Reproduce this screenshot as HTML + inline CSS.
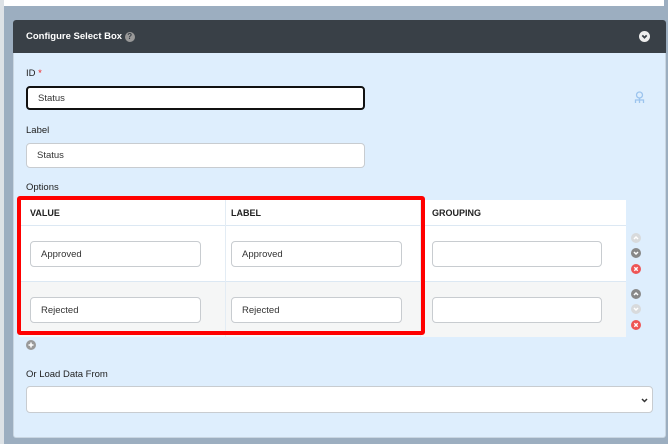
<!DOCTYPE html><html><head><style>
body{margin:0;width:668px;height:444px;background:#9caec0;font-family:"Liberation Sans",sans-serif;position:relative;overflow:hidden;font-size:9.5px;color:#222}
.a{position:absolute}
.in{position:absolute;background:#fff;border:1px solid #c8ccd0;border-radius:4px;box-sizing:border-box;padding-left:10px;font-size:9.5px;color:#333;display:flex;align-items:center}
.ic{position:absolute;width:10px;height:10px}
</style></head><body>
<div class="a" style="left:0;top:0;width:4px;height:444px;background:#dde2e6"></div>
<div class="a" style="left:4px;top:0;width:660px;height:6px;background:#fff"></div>
<div class="a" style="left:13px;top:20px;width:653px;height:418px;background:#deeefd;border-radius:3px;border:1px solid #c9d6e2;box-sizing:border-box"></div>
<div class="a" style="left:13px;top:20px;width:653px;height:33px;background:#394047;border-radius:3px 3px 0 0"></div>
<div class="a" style="left:26px;top:31px;color:#fff;font-weight:bold;font-size:9.5px">Configure Select Box <span style="display:inline-block;width:10px;height:10px;border-radius:50%;background:#999;color:#394047;font-size:8px;line-height:10px;text-align:center">?</span></div>
<svg class="ic" style="left:639px;top:31px;width:11px;height:11px" viewBox="0 0 10 10"><circle cx="5" cy="5" r="5" fill="#eee"/><path d="M3 4l2 2 2-2" stroke="#394047" stroke-width="1.6" fill="none"/></svg>
<div class="a" style="left:26px;top:68px">ID <span style="color:#e22">*</span></div>
<div class="in" style="left:26px;top:86px;width:339px;height:24px;border:2px solid #111">Status</div>
<svg class="a" style="left:634px;top:91px" width="11" height="13" viewBox="0 0 11 13"><circle cx="5.5" cy="4" r="3" fill="none" stroke="#9cc4ee" stroke-width="1.3"/><path d="M1.5 12v-3h8v3M5.5 7v5" stroke="#9cc4ee" stroke-width="1.3" fill="none"/></svg>
<div class="a" style="left:26px;top:125px">Label</div>
<div class="in" style="left:26px;top:143px;width:339px;height:25px">Status</div>
<div class="a" style="left:26px;top:182px">Options</div>
<div class="a" style="left:19px;top:200px;width:607px;height:26px;background:#fff;border-bottom:1px solid #dce8f3;box-sizing:border-box"></div>
<div class="a" style="left:19px;top:226px;width:607px;height:56px;background:#fff;border-bottom:1px solid #dce8f3;box-sizing:border-box"></div>
<div class="a" style="left:19px;top:282px;width:607px;height:55px;background:#f5f6f6"></div>
<div class="a" style="left:225px;top:200px;width:1px;height:137px;background:#e3ecf4"></div>
<div class="a" style="left:420px;top:200px;width:1px;height:137px;background:#e3ecf4"></div>
<div class="a" style="left:30px;top:208px;font-weight:bold;font-size:9px">VALUE</div>
<div class="a" style="left:231px;top:208px;font-weight:bold;font-size:9px">LABEL</div>
<div class="a" style="left:432px;top:208px;font-weight:bold;font-size:9px">GROUPING</div>
<div class="in" style="left:30px;top:241px;width:171px;height:26px">Approved</div>
<div class="in" style="left:231px;top:241px;width:171px;height:26px">Approved</div>
<div class="in" style="left:432px;top:241px;width:170px;height:26px"></div>
<div class="in" style="left:30px;top:297px;width:171px;height:26px">Rejected</div>
<div class="in" style="left:231px;top:297px;width:171px;height:26px">Rejected</div>
<div class="in" style="left:432px;top:297px;width:170px;height:26px"></div>
<div class="a" style="left:17px;top:196px;width:408px;height:139px;border:4px solid #f00;border-radius:3px;box-sizing:border-box"></div>
<svg class="ic" style="left:631px;top:233px" viewBox="0 0 10 10"><circle cx="5" cy="5" r="5" fill="#d8dadc"/><path d="M3 6l2-2 2 2" stroke="#fff" stroke-width="1.5" fill="none"/></svg>
<svg class="ic" style="left:631px;top:248px" viewBox="0 0 10 10"><circle cx="5" cy="5" r="5" fill="#888"/><path d="M3 4l2 2 2-2" stroke="#fff" stroke-width="1.5" fill="none"/></svg>
<svg class="ic" style="left:631px;top:264px" viewBox="0 0 10 10"><circle cx="5" cy="5" r="5" fill="#e55"/><path d="M3.3 3.3l3.4 3.4M6.7 3.3l-3.4 3.4" stroke="#fff" stroke-width="1.4"/></svg>
<svg class="ic" style="left:631px;top:289px" viewBox="0 0 10 10"><circle cx="5" cy="5" r="5" fill="#888"/><path d="M3 6l2-2 2 2" stroke="#fff" stroke-width="1.5" fill="none"/></svg>
<svg class="ic" style="left:631px;top:304px" viewBox="0 0 10 10"><circle cx="5" cy="5" r="5" fill="#d8dadc"/><path d="M3 4l2 2 2-2" stroke="#fff" stroke-width="1.5" fill="none"/></svg>
<svg class="ic" style="left:631px;top:320px" viewBox="0 0 10 10"><circle cx="5" cy="5" r="5" fill="#e55"/><path d="M3.3 3.3l3.4 3.4M6.7 3.3l-3.4 3.4" stroke="#fff" stroke-width="1.4"/></svg>
<svg class="ic" style="left:26px;top:340px" viewBox="0 0 10 10"><circle cx="5" cy="5" r="5" fill="#999"/><path d="M5 2.5v5M2.5 5h5" stroke="#fff" stroke-width="1.5"/></svg>
<div class="a" style="left:26px;top:369px">Or Load Data From</div>
<div class="in" style="left:26px;top:386px;width:627px;height:27px"><svg style="position:absolute;right:4px;top:11px" width="7" height="5" viewBox="0 0 7 5"><path d="M1 1l2.5 2.5L6 1" stroke="#333" stroke-width="1.5" fill="none"/></svg></div>
</body></html>
